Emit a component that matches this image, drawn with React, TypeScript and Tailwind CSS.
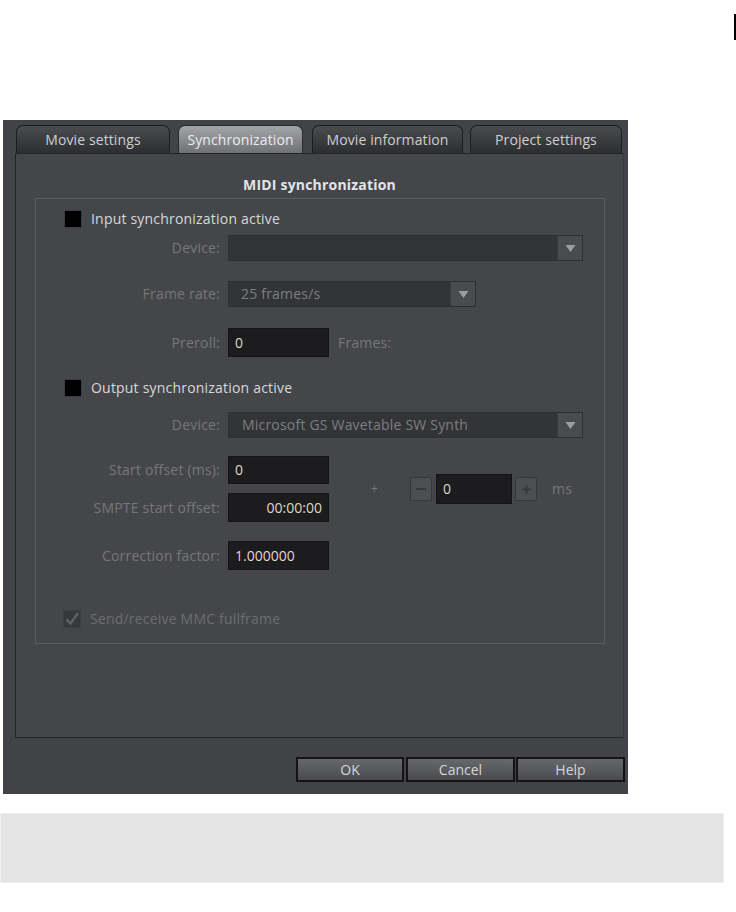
import React from "react";

function Tab({ label, w, ml, active }: { label: string; w: string; ml: string; active?: boolean }) {
  return (
    <div
      className={`${w} ${ml} h-[28px] rounded-t-[7px] border border-b-0 flex items-center justify-center text-[14px] tracking-[0.1px] leading-none ${
        active
          ? "border-[#2a2b2e] bg-gradient-to-b from-[#a3a5a9] to-[#6f7175] text-[#ececec]"
          : "border-[#1b1c1e] bg-gradient-to-b from-[#4b4c50] to-[#2d2e31] text-[#cfcfcf]"
      }`}
    >
      {label}
    </div>
  );
}

function Arrow() {
  return (
    <div className="w-[25px] h-full bg-[#4a4b4f] border-l border-[#3a3b3e] flex items-center justify-center">
      <svg width="11" height="9" viewBox="0 0 11 9">
        <path d="M0.5 1 L10.5 1 L5.5 8 Z" fill="#9c9da0" />
      </svg>
    </div>
  );
}

function Label({ text }: { text: string }) {
  return <div className="w-[184px] text-right text-[14px] tracking-[0.2px] text-[#76777a] leading-none">{text}</div>;
}

function Input({ value, h, right }: { value: string; h: string; right?: boolean }) {
  return (
    <div
      className={`ml-[8px] w-[101px] ${h} bg-[#1c1c1e] border border-[#141416] flex items-center text-[14px] text-[#dcd8c8] leading-none ${
        right ? "justify-end pr-[6px]" : "pl-[6px]"
      }`}
    >
      {value}
    </div>
  );
}

export default function App() {
  return (
    <div className="w-[736px] h-[912px] bg-white font-['Open_Sans',sans-serif] overflow-hidden">
      <div className="h-[120px] flex justify-end">
        <div className="mt-[14px] w-[2px] h-[26px] bg-black" />
      </div>

      <div className="ml-[3px] w-[625px] h-[674px] bg-[#424347] flex flex-col pl-[12px] pt-[5px]">
        {/* tabs */}
        <div className="flex items-end pl-[1px]">
          <Tab label="Movie settings" w="w-[154px]" ml="ml-0" />
          <Tab label="Synchronization" w="w-[125px]" ml="ml-[8px]" active />
          <Tab label="Movie information" w="w-[151px]" ml="ml-[9px]" />
          <Tab label="Project settings" w="w-[152px]" ml="ml-[7px]" />
        </div>

        {/* panel */}
        <div className="w-[609px] h-[585px] bg-[#45464a] border border-[#232427] border-r-[#38393c] flex flex-col">
          <div className="pt-[22px] h-[40px] text-center text-[14px] tracking-[0.2px] font-bold leading-[18px] text-[#e2e4e8]">
            MIDI synchronization
          </div>

          <div className="ml-[19px] mt-[4px] w-[570px] h-[446px] border border-[#5c5d61] flex flex-col">
            {/* input sync checkbox */}
            <div className="mt-[10px] h-[19px] flex items-center pl-[28px]">
              <div className="w-[18px] h-[18px] bg-black border border-[#3c3d40]" />
              <div className="ml-[9px] text-[14px] tracking-[0.2px] text-[#d8d8d8] leading-none">Input synchronization active</div>
            </div>

            {/* device */}
            <div className="mt-[7px] h-[26px] flex items-center">
              <Label text="Device:" />
              <div className="ml-[8px] w-[355px] h-[26px] bg-[#333437] border border-[#2e2f32] flex items-center justify-between">
                <div />
                <Arrow />
              </div>
            </div>

            {/* frame rate */}
            <div className="mt-[20px] h-[26px] flex items-center">
              <Label text="Frame rate:" />
              <div className="ml-[8px] w-[248px] h-[26px] bg-[#333437] border border-[#2e2f32] flex items-center justify-between">
                <div className="pl-[12px] text-[14px] tracking-[0.2px] text-[#7d7e81] leading-none">25 frames/s</div>
                <Arrow />
              </div>
            </div>

            {/* preroll */}
            <div className="mt-[21px] h-[29px] flex items-center">
              <Label text="Preroll:" />
              <Input value="0" h="h-[29px]" />
              <div className="ml-[9px] text-[14px] tracking-[0.2px] text-[#76777a] leading-none">Frames:</div>
            </div>

            {/* output sync checkbox */}
            <div className="mt-[22px] h-[18px] flex items-center pl-[28px]">
              <div className="w-[18px] h-[18px] bg-black border border-[#3c3d40]" />
              <div className="ml-[9px] text-[14px] tracking-[0.2px] text-[#d8d8d8] leading-none">Output synchronization active</div>
            </div>

            {/* device 2 */}
            <div className="mt-[15px] h-[26px] flex items-center">
              <Label text="Device:" />
              <div className="ml-[8px] w-[355px] h-[26px] bg-[#333437] border border-[#2e2f32] flex items-center justify-between">
                <div className="pl-[13px] text-[14px] tracking-[0.2px] text-[#7d7e81] leading-none">Microsoft GS Wavetable SW Synth</div>
                <Arrow />
              </div>
            </div>

            {/* start offset + smpte + spinner */}
            <div className="mt-[18px] flex items-center">
              <div className="flex flex-col">
                <div className="h-[28px] flex items-center">
                  <Label text="Start offset (ms):" />
                  <Input value="0" h="h-[28px]" />
                </div>
                <div className="mt-[9px] h-[29px] flex items-center">
                  <Label text="SMPTE start offset:" />
                  <Input value="00:00:00" h="h-[29px]" right />
                </div>
              </div>
              <div className="w-[81px] pl-[42px] text-[12px] text-[#7a7b7e] leading-none">+</div>
              <div className="w-[22px] h-[24px] bg-[#4d4e52] border border-[#35363a] rounded-[2px] flex items-center justify-center">
                <div className="w-[10px] h-[2px] bg-[#38393c]" />
              </div>
              <div className="ml-[4px] w-[76px] h-[30px] bg-[#1c1c1e] border border-[#141416] flex items-center pl-[6px] text-[14px] text-[#dcd8c8] leading-none">
                0
              </div>
              <div className="ml-[3px] w-[22px] h-[24px] bg-[#4d4e52] border border-[#35363a] rounded-[2px] flex items-center justify-center">
                <svg width="11" height="11" viewBox="0 0 11 11">
                  <path d="M5.5 1 V10 M1 5.5 H10" stroke="#38393c" strokeWidth="2" />
                </svg>
              </div>
              <div className="ml-[15px] text-[14px] tracking-[0.2px] text-[#76777a] leading-none">ms</div>
            </div>

            {/* correction factor */}
            <div className="mt-[19px] h-[29px] flex items-center">
              <Label text="Correction factor:" />
              <Input value="1.000000" h="h-[29px]" />
            </div>

            {/* send/receive */}
            <div className="mt-[40px] h-[18px] flex items-center pl-[27px]">
              <div className="w-[18px] h-[18px] bg-[#37383b] border border-[#3e3f42] flex items-center justify-center">
                <svg width="16" height="16" viewBox="0 0 16 16">
                  <path d="M2.5 8.5 L6.5 12.5 L14 2" stroke="#5d5e61" strokeWidth="2.6" fill="none" />
                </svg>
              </div>
              <div className="ml-[9px] text-[14px] tracking-[0.2px] text-[#6c6d70] leading-none">Send/receive MMC fullframe</div>
            </div>
          </div>
        </div>

        {/* buttons */}
        <div className="mt-[19px] flex justify-end pr-[3px]">
          <button className="w-[108px] h-[25px] border-2 border-[#141416] bg-gradient-to-b from-[#66686c] to-[#4a4c50] text-[14px] text-[#d6d6d6] leading-none">
            OK
          </button>
          <button className="ml-[2px] w-[109px] h-[25px] border-2 border-[#141416] bg-gradient-to-b from-[#66686c] to-[#4a4c50] text-[14px] text-[#d6d6d6] leading-none">
            Cancel
          </button>
          <button className="ml-[1px] w-[109px] h-[25px] border-2 border-[#141416] bg-gradient-to-b from-[#66686c] to-[#4a4c50] text-[14px] text-[#d6d6d6] leading-none">
            Help
          </button>
        </div>
      </div>

      <div className="mt-[19px] w-[724px] h-[70px] bg-[#e4e4e4] border border-[#f0f0f0]" />
    </div>
  );
}
